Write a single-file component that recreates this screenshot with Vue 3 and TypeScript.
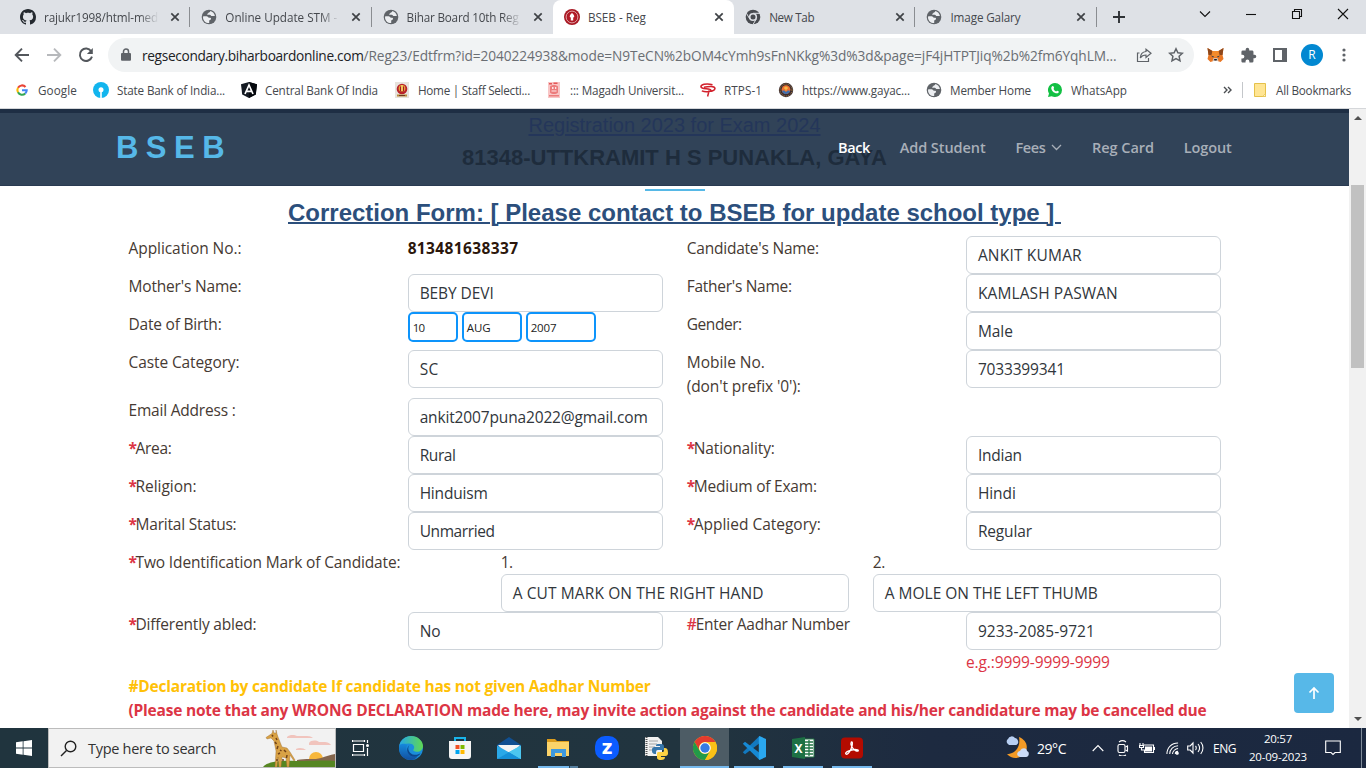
<script setup lang="ts">
interface Tab { icon: string; title: string; width: number; active?: boolean; line?: boolean }
interface Bookmark { icon: string; title: string; width: number }
interface Field { label: string; width: number; mark?: string; value?: string; valueWidth?: number; kind?: string; note?: string }
interface TaskApp { icon: string; state?: string }

// Stretches or tightens a run of text to a given width through its letter spacing.
const vFit = {
  mounted(el: HTMLElement, binding: { value: number }) {
    const count = (el.textContent || '').length
    const gap = (binding.value - el.getBoundingClientRect().width) / count
    el.style.letterSpacing = gap.toFixed(3) + 'px'
  }
}

const icons: Record<string, string> = {
  github: '<path fill="#24292f" d="M8 0C3.58 0 0 3.58 0 8c0 3.54 2.29 6.53 5.47 7.59.4.07.55-.17.55-.38 0-.19-.01-.82-.01-1.49-2.01.37-2.53-.49-2.69-.94-.09-.23-.48-.94-.82-1.13-.28-.15-.68-.52-.01-.53.63-.01 1.08.58 1.23.82.72 1.21 1.87.87 2.33.66.07-.52.28-.87.51-1.07-1.78-.2-3.64-.89-3.64-3.95 0-.87.31-1.59.82-2.15-.08-.2-.36-1.02.08-2.12 0 0 .67-.21 2.2.82.64-.18 1.32-.27 2-.27s1.36.09 2 .27c1.53-1.04 2.2-.82 2.2-.82.44 1.1.16 1.92.08 2.12.51.56.82 1.27.82 2.15 0 3.07-1.87 3.75-3.65 3.95.29.25.54.73.54 1.48 0 1.07-.01 1.93-.01 2.2 0 .21.15.46.55.38A8.01 8.01 0 0 0 16 8c0-4.42-3.58-8-8-8z"/>',
  globe: '<circle cx="8" cy="8" r="7.3" fill="#5f6368"/><path fill="#eceef1" d="M2.300 7.200h3.400c1.200 0 1.300 1.600 2.400 1.600h1.200c.9 0 1 1.700.2 2-.9.300-1.300.400-1.300 1.400v1.900C4.700 14.200 2 11.500 2 8.200zM9.300 2.100c-.1.900-.5 1.200-1.300 1.300-.9.100-.7 1.200-1.500 1.300-.5.100-.5 1 .1 1h2.300c.8 0 .8 1.100 1.500 1.200h3.500C13.400 4.600 11.800 2.700 9.300 2.100z"/>',
  bseb: '<circle cx="8" cy="8" r="8" fill="#a81823"/><circle cx="8" cy="8" r="5.900" fill="none" stroke="#e3a2a5" stroke-width="1"/><circle cx="8" cy="8" r="4.600" fill="#b41c28"/><path d="M8 3.900c1.700 1.200 2.400 2.600 2.200 4.200l-1 .4V11.500H6.800V8.500l-1-.4C5.600 6.500 6.300 5.100 8 3.900z" fill="#fff"/>',
  chromeGray: '<circle cx="8" cy="8" r="7.300" fill="#484b50"/><circle cx="8" cy="8" r="4.100" fill="#dee1e6"/><circle cx="8" cy="8" r="2.500" fill="#484b50"/><path d="M8 4.300h7M4.700 9.900L1.400 4.200M11.300 9.900l-3.500 6" stroke="#dee1e6" stroke-width="1"/>',
  google: '<g fill="none" stroke-width="2.100"><path d="M11.500 5A4.600 4.600 0 0 0 4 5.800" stroke="#ea4335"/><path d="M4 5.700a4.600 4.600 0 0 0 0 4.700" stroke="#fbbc05"/><path d="M4 10.300a4.600 4.600 0 0 0 7.200 1.200" stroke="#34a853"/><path d="M8 8.200h4.700a4.600 4.600 0 0 1-1.500 3.300" stroke="#4285f4"/></g>',
  sbi: '<circle cx="8" cy="8" r="8" fill="#12b5ee"/><circle cx="8" cy="7.800" r="2.500" fill="#fff"/><path d="M7.200 9h1.600v7H7.200z" fill="#fff"/>',
  angular: '<path d="M8 0l8 2.300-1.200 10.200L8 16l-6.800-3.500L0 2.300z" fill="#141a22"/><path d="M8 0l8 2.300-1.200 10.200L8 16z" fill="#05080d"/><path d="M4 12L8 3l4 9M5.700 9.300h4.600" fill="none" stroke="#fff" stroke-width="1.700"/>',
  staff: '<rect x="1" width="14" height="16" fill="#e7e2dc"/><circle cx="8" cy="7" r="5.300" fill="#b9222b"/><circle cx="8" cy="6.500" r="3.400" fill="#e4a03b"/><path d="M6 4.500h4v5H6z" fill="#a31825"/><path d="M7 3h2v6H7z" fill="#f0c55b"/><path d="M3 12.500h10v2H3z" fill="#b98b39"/><path d="M5 13.500h6" stroke="#703b22"/>',
  magadh: '<rect x="2" width="12" height="16" fill="#f8c6c6"/><path d="M3 1h3v1.500H3zM7.500.500h4V2h-4z" fill="#e45757"/><path d="M4 4.500c2-2 6-2 8 0v6c-2 2-6 2-8 0zM3 13h10v1.500H3z" fill="#ec7c7c"/><path d="M6 5h1.500v2H6zm3 0h1.300v2H9zM5.500 8.500h5v1h-5z" fill="#fde8e8"/>',
  rtps: '<path d="M12.500 2.700C6 .8.500 2.700 1 5c.6 2.500 9.500.8 9.800 3 .2 1.600-5 2.500-9 .9M4 5.300c4.500-1 11-1.500 11 1.300 0 2-3.800 2.700-6 2.500l-1.400 5.400" fill="none" stroke="#d2202b" stroke-width="1.500"/>',
  gaya: '<circle cx="8" cy="8" r="7.200" fill="#392c32"/><circle cx="8" cy="8" r="6" fill="none" stroke="#b98a3e" stroke-dasharray="1 1"/><circle cx="8" cy="7.600" r="4.400" fill="#ee7130"/><path d="M4 9c2-1 3 0 4 1 1-1 2-2 4-1-1 4-7 4-8 0z" fill="#3b6fb0"/><path d="M8 4.500v4M6 6h4" stroke="#fbd34f"/>',
  whatsapp: '<path d="M8 1a7 7 0 0 1 0 14 7 7 0 0 1-3.400-.8L1 15l1-3.400A7 7 0 0 1 8 1z" fill="#12c043"/><path d="M5.200 4.200c1-.7 1.700.7 1.900 1.500.1.500-.7.900-.5 1.300.5 1.200 1.300 1.900 2.500 2.400.5.100.8-.9 1.300-.7 2 .8 1.500 1.400 1 2-.8.900-2.300.8-3.700.1C6 9.900 4.900 8.500 4.400 6.900c-.3-1.100-.1-2.100.8-2.700z" fill="#fff"/>',
  folderMark: '<path d="M2.500 1.500h11v13h-11z" fill="#ffe593" stroke="#e5c14a"/><path d="M10.500 14.500l3-3v3z" fill="#fff4c8" stroke="#e5c14a" stroke-width=".7"/>'
}

const apps: Record<string, string> = {
  edge: '<defs><linearGradient id="ea" x1="0" x2="1"><stop stop-color="#25a8e7"/><stop offset="1" stop-color="#5fd852"/></linearGradient><linearGradient id="eb" x1="0" y1="0" x2="0" y2="1"><stop stop-color="#1689dc"/><stop offset="1" stop-color="#124f9f"/></linearGradient></defs><circle cx="12" cy="12" r="12" fill="#1a8edb"/><path d="M.3 9.500C1.600 3.900 6.400 0 12 0c7 0 12 5 12 10 0 3.800-3 5.800-6 5.800-2.700 0-4.400-1-3.500-2.200 2-3-.5-6-4.500-6-4 0-8 1-9.700 1.900z" fill="url(#ea)"/><path d="M8 9.200c-2.400 7 3.500 12.500 11.500 9.800C18 22 15 24 12 24 4 24-1.500 17 .4 9.400c2-2 5.600-2 7.600-.2z" fill="url(#eb)"/><path d="M10.500 9c-3 3.500-.2 9.300 5 9.800 2.700.2 4.500-.5 6-1.500-1 2.200-3.200 3.300-6 3.300C9 20.600 5.500 13.500 10.500 9z" fill="#0c468d"/>',
  store: '<path d="M7 6V2h10v4" fill="none" stroke="#19b4ea" stroke-width="2"/><path d="M1 5h22v15a3 3 0 0 1-3 3H4a3 3 0 0 1-3-3z" fill="#f5f5f5"/><path d="M7.500 9h4v4h-4z" fill="#f25022"/><path d="M12.500 9h4v4h-4z" fill="#7fba00"/><path d="M7.500 14h4v4h-4z" fill="#00a4ef"/><path d="M12.500 14h4v4h-4z" fill="#ffb900"/>',
  mail: '<path d="M0 9l12-8 12 8v3H0z" fill="#104f91"/><path d="M1 9h22l-6 7H7z" fill="#f4f4f4"/><path d="M0 9.500l13 7.500L0 23z" fill="#2aa8e8"/><path d="M24 9.500L0 23h24z" fill="#53cff2"/><path d="M0 23l12-7 12 7z" fill="#1690d8"/><path d="M24 9.500L12 16l12 7z" fill="#4cc6ef"/>',
  explorer: '<path d="M1 3h8l2 2h12v4H1z" fill="#dc9d1d"/><path d="M1 6h22v14H1z" fill="#fbd369"/><path d="M5 13h15v8h-4v-4H9v4H5z" fill="#3e99de"/>',
  zoomz: '<rect width="24" height="24" rx="10" fill="#0b5cff"/><text x="12" y="18" text-anchor="middle" font-family="Open Sans, sans-serif" font-weight="800" font-size="16.500" fill="#fff">Z</text>',
  python: '<path d="M1 1h13l4 4v15H1z" fill="#f1f1f1"/><path d="M2.500 1v19" stroke="#565656" stroke-width="2" stroke-dasharray="1 1"/><path d="M5 5h9M5 8h8M5 11h6M5 14h4" stroke="#a4a4a4"/><path d="M14 8h3c2.500 0 3 1 3 3v3h-6c-2 0-2 1-2 4-4 0-4-2-4-4 0-3 2-3 3-3h5v-1h-4c0-1 0-2 2-2z" fill="#3776ab"/><path d="M20 12c3 0 4 1 4 5 0 3-2 3-4 3h-3v1h4c0 2-1 3-4 3-4 0-4-2-4-3v-3c0-2 1-2 2-2h4c1 0 1-2 1-4z" fill="#ffd343"/>',
  chrome: '<circle cx="12" cy="12" r="12" fill="#fbc116"/><path d="M1.600 6A12 12 0 0 1 22.400 6H12a6 6 0 0 0-5.200 9z" fill="#e33b2e"/><path d="M1.600 6A12 12 0 0 0 12 24l5.200-9A6 6 0 0 1 6.800 15z" fill="#229a48"/><path d="M22.400 6A12 12 0 0 1 12 24l5.200-9c1.600-3 .8-7-2.200-9z" fill="#fbc116"/><circle cx="12" cy="12" r="5.800" fill="#fff"/><circle cx="12" cy="12" r="4.700" fill="#367be2"/>',
  vscode: '<path d="M17.500 0v7.200L3 18.200.800 16.200z" fill="#1279c0"/><path d="M.8 7.800L3 5.800l14.500 11V24z" fill="#1689d4"/><path d="M17.500 0L24 3v18l-6.500 3c-.5-.3-.7-.8-.7-1.500v-21c0-.7.200-1.200.7-1.500z" fill="#2aa7ef"/>',
  excel: '<path d="M13 3h10v18H13z" fill="#fff" stroke="#237445"/><path d="M14 6h8M14 9h8M14 12h8M14 15h8M14 18h8M18 4v16" stroke="#237445" stroke-width="1.300"/><path d="M1 3l13-2v22L1 21z" fill="#1d7044"/><text x="7.500" y="16.500" text-anchor="middle" font-family="Open Sans, sans-serif" font-weight="700" font-size="12" fill="#fff">X</text>',
  acrobat: '<rect x="1" y="1.500" width="22" height="21" rx="4" fill="#b30b00"/><path d="M6 18c-2-1.500 5-4.500 9-4.500 5 0 3.500 2.500 1 1.300C12 13 10 8 11.300 6c1.500-1 1.500 3-.3 7-1.500 3.200-3.700 6.200-5 5z" fill="none" stroke="#fff" stroke-width="1.300"/>'
}

const tabs: Tab[] = [
  { icon: 'github', title: 'rajukr1998/html-med', width: 114, line: true },
  { icon: 'globe', title: 'Online Update STM -', width: 112, line: true },
  { icon: 'globe', title: 'Bihar Board 10th Reg', width: 112 },
  { icon: 'bseb', title: 'BSEB - Reg', width: 58, active: true },
  { icon: 'chromeGray', title: 'New Tab', width: 45, line: true },
  { icon: 'globe', title: 'Image Galary', width: 70, line: true }
]

const bookmarks: Bookmark[] = [
  { icon: 'google', title: 'Google', width: 39 },
  { icon: 'sbi', title: 'State Bank of India...', width: 108 },
  { icon: 'angular', title: 'Central Bank Of India', width: 113 },
  { icon: 'staff', title: 'Home | Staff Selecti...', width: 112 },
  { icon: 'magadh', title: '::: Magadh Universit...', width: 114 },
  { icon: 'rtps', title: 'RTPS-1', width: 38 },
  { icon: 'gaya', title: 'https://www.gayac...', width: 108 },
  { icon: 'globe', title: 'Member Home', width: 81 },
  { icon: 'whatsapp', title: 'WhatsApp', width: 56 }
]

const firstFields: Field[] = [
  { label: 'Application No.:', width: 113, value: '813481638337', valueWidth: 111, kind: 'plain' },
  { label: "Candidate's Name:", width: 132, value: 'ANKIT KUMAR', valueWidth: 104 },
  { label: "Mother's Name:", width: 113, value: 'BEBY DEVI', valueWidth: 74 },
  { label: "Father's Name:", width: 105, value: 'KAMLASH PASWAN', valueWidth: 140 },
  { label: 'Date of Birth:', width: 93, kind: 'date' },
  { label: 'Gender:', width: 55, value: 'Male', valueWidth: 35 },
  { label: 'Caste Category:', width: 111, value: 'SC', valueWidth: 19 },
  { label: 'Mobile No.', width: 78, value: '7033399341', valueWidth: 87, note: "(don't prefix '0'):" },
  { label: 'Email Address :', width: 107, value: 'ankit2007puna2022@gmail.com', valueWidth: 228 },
  { label: '', width: 0, kind: 'none' },
  { mark: '*', label: 'Area:', width: 36, value: 'Rural', valueWidth: 36 },
  { mark: '*', label: 'Nationality:', width: 81, value: 'Indian', valueWidth: 44 },
  { mark: '*', label: 'Religion:', width: 61, value: 'Hinduism', valueWidth: 68 },
  { mark: '*', label: 'Medium of Exam:', width: 123, value: 'Hindi', valueWidth: 38 },
  { mark: '*', label: 'Marital Status:', width: 101, value: 'Unmarried', valueWidth: 75 },
  { mark: '*', label: 'Applied Category:', width: 127, value: 'Regular', valueWidth: 54 }
]

const marks = [
  { no: '1.', text: 'A CUT MARK ON THE RIGHT HAND', width: 251 },
  { no: '2.', text: 'A MOLE ON THE LEFT THUMB', width: 213 }
]

const taskApps: TaskApp[] = [
  { icon: 'edge' }, { icon: 'store' }, { icon: 'mail' }, { icon: 'explorer', state: 'multi' },
  { icon: 'zoomz' }, { icon: 'python' }, { icon: 'chrome', state: 'current' },
  { icon: 'vscode', state: 'open' }, { icon: 'excel', state: 'open' }, { icon: 'acrobat', state: 'open' }
]
</script>

<template>
  <div class="screen">
    <div class="tabstrip">
      <div v-for="(tab, i) in tabs" :key="i" class="tab" :class="{ active: tab.active, line: tab.line }">
        <svg class="i16" viewBox="0 0 16 16" v-html="icons[tab.icon]"></svg>
        <div class="tab-title" :class="{ fade: tab.width > 100 }"><span v-fit="tab.width" class="t">{{ tab.title }}</span></div>
        <svg class="close" viewBox="0 0 10 10"><path d="M1.300 1.300l7.400 7.400M8.700 1.300L1.300 8.700" stroke="#3f4246" stroke-width="1.700" /></svg>
      </div>
      <svg class="plus" viewBox="0 0 12 12"><path d="M6 0v12M0 6h12" stroke="#2f3236" stroke-width="1.900" /></svg>
      <div class="window-controls">
        <svg viewBox="0 0 46 28"><path d="M18 11.500l5 5 5-5" /></svg>
        <svg viewBox="0 0 46 28"><path d="M18 14.500h10" /></svg>
        <svg viewBox="0 0 46 28"><path d="M18.500 11.500h7v7h-7zM20.500 11.500v-2h7v7h-2" /></svg>
        <svg viewBox="0 0 46 28"><path d="M18 9l10 10M28 9L18 19" /></svg>
      </div>
    </div>

    <div class="toolbar">
      <svg class="nav-ic" viewBox="0 0 16 16"><path d="M15 8H2M8 1.700L1.700 8 8 14.300" stroke="#53575c" /></svg>
      <svg class="nav-ic" viewBox="0 0 16 16"><path d="M1 8h13M8 1.700L14.300 8 8 14.300" stroke="#b7b9bc" /></svg>
      <svg class="nav-ic" viewBox="0 0 16 16"><path d="M13.200 4.200A6.200 6.200 0 1 0 14 9.600" stroke="#53575c" /><path d="M14.800 1v5.900H8.900z" fill="#53575c" stroke="none" /></svg>
      <div class="omnibox">
        <svg class="lock" viewBox="0 0 10 14"><path d="M2.500 6V3.500a2.500 2.500 0 0 1 5 0V6" fill="none" stroke="#5f6368" stroke-width="1.500" /><rect x="0" y="5" width="10" height="7.800" rx="1" fill="#5f6368" /></svg>
        <span v-fit="221.500" class="host">regsecondary.biharboardonline.com</span>
        <span v-fit="753" class="path">/Reg23/Edtfrm?id=2040224938&amp;mode=N9TeCN%2bOM4cYmh9sFnNKkg%3d%3d&amp;page=jF4jHTPTJiq%2b%2fm6YqhLM...</span>
        <svg class="share" viewBox="0 0 16 16"><path d="M3.500 6H1.500v8.500h11V11M10 2.200l5 4.100-5 4.100V8C7.500 8 5.500 9 4.300 11 4.500 7.500 6.700 4.800 10 4.500z" fill="none" stroke="#5f6368" stroke-width="1.200" /></svg>
        <svg class="star" viewBox="0 0 16 16"><path d="M8 1.800l1.900 4 4.500.5-3.300 3 .9 4.500L8 11.500l-4 2.300.9-4.500-3.300-3 4.500-.5z" fill="none" stroke="#5f6368" stroke-width="1.500" /></svg>
      </div>
      <svg class="fox" viewBox="0 0 16 16"><path d="M0 1l5 3h6l5-3-1 7 1 4-3 3-3-1H6l-3 1-3-3 1-4z" fill="#e87724" /><path d="M0 1l5 3-1 4-3 0zM16 1l-5 3 1 4 3 0z" fill="#8d471b" /><path d="M5 4h6l1 5-4 1-4-1z" fill="#f48b2c" /><path d="M3.500 8.500l3 1-1 1zM12.500 8.500l-3 1 1 1z" fill="#2c3e50" /><path d="M6 11h4l1 3H5z" fill="#d5bfb2" /><path d="M6.500 12h3l-.5 1.500H7z" fill="#1c2229" /></svg>
      <svg class="puzzle" viewBox="0 0 24 24"><path fill="#5f6368" d="M20.500 11H19V7c0-1.100-.9-2-2-2h-4V3.500a2.500 2.500 0 0 0-5 0V5H4a2 2 0 0 0-2 2v3.800h1.500a2.700 2.700 0 0 1 0 5.400H2V20c0 1.100.9 2 2 2h3.800v-1.500a2.700 2.700 0 0 1 5.400 0V22H17a2 2 0 0 0 2-2v-4h1.500a2.500 2.500 0 0 0 0-5z" /></svg>
      <svg class="panel" viewBox="0 0 14 14"><path d="M1 1h12v12H1z" fill="none" stroke="#5f6368" stroke-width="2" /><path d="M9 1h4v12H9z" fill="#5f6368" /></svg>
      <span class="avatar">R</span>
      <svg class="dots" viewBox="0 0 4 14"><circle cx="2" cy="2" r="1.600" /><circle cx="2" cy="7" r="1.600" /><circle cx="2" cy="12" r="1.600" /></svg>
    </div>

    <div class="bookmarks">
      <div v-for="b in bookmarks" :key="b.title" class="bookmark">
        <svg class="i16" viewBox="0 0 16 16" v-html="icons[b.icon]"></svg>
        <span v-fit="b.width" class="t">{{ b.title }}</span>
      </div>
      <div class="more">
        <svg class="chev" viewBox="0 0 9 8"><path d="M1 1l3 3-3 3M5 1l3 3-3 3" fill="none" stroke="#4a4d51" stroke-width="1.400" /></svg>
        <i class="sep"></i>
        <svg class="i16" viewBox="0 0 16 16" v-html="icons.folderMark"></svg>
        <span v-fit="75" class="t">All Bookmarks</span>
      </div>
    </div>

    <div class="viewport">
      <div class="page">
        <header class="hero">
          <div class="under">
            <div class="line1"><span v-fit="292" class="t">Registration 2023 for Exam 2024</span></div>
            <div class="line2"><span v-fit="425" class="t">81348-UTTKRAMIT H S PUNAKLA, GAYA</span></div>
          </div>
          <nav class="nav">
            <div class="brand"><span v-fit="108" class="t">B S E B</span></div>
            <span v-fit="32" class="link on">Back</span>
            <span v-fit="86" class="link">Add Student</span>
            <span class="link fees"><span v-fit="30" class="t">Fees</span><svg viewBox="0 0 11 7"><path d="M1 1l4.500 4.500L10 1" fill="none" stroke="#a8afb8" stroke-width="1.300" /></svg></span>
            <span v-fit="62" class="link">Reg Card</span>
            <span v-fit="48" class="link">Logout</span>
          </nav>
        </header>
        <div class="rule"></div>
        <h2><span v-fit="773" class="t">Correction Form: [ Please contact to BSEB for update school type ]&nbsp;</span></h2>

        <div class="form">
          <div v-for="(f, i) in firstFields" :key="i" class="field">
            <div class="label">
              <b v-if="f.mark" class="req">{{ f.mark }}</b><span v-if="f.label" v-fit="f.width" class="t">{{ f.label }}</span>
              <div v-if="f.note"><span v-fit="114" class="t">{{ f.note }}</span></div>
            </div>
            <div class="value">
              <div v-if="f.kind === 'plain'" class="number"><span v-fit="f.valueWidth" class="t">{{ f.value }}</span></div>
              <div v-else-if="f.kind === 'date'" class="dates">
                <div class="d day"><span v-fit="12" class="t">10</span></div>
                <div class="d month"><span v-fit="24" class="t">AUG</span></div>
                <div class="d year"><span v-fit="26" class="t">2007</span></div>
              </div>
              <div v-else-if="f.value" class="input"><span v-fit="f.valueWidth" class="t">{{ f.value }}</span></div>
            </div>
          </div>
        </div>

        <div class="marks">
          <div class="label"><b class="req">*</b><span v-fit="265" class="t">Two Identification Mark of Candidate:</span></div>
          <div v-for="m in marks" :key="m.no" class="value">
            <div><span v-fit="12" class="t">{{ m.no }}</span></div>
            <div class="input"><span v-fit="m.width" class="t">{{ m.text }}</span></div>
          </div>
        </div>

        <div class="form">
          <div class="field">
            <div class="label"><b class="req">*</b><span v-fit="121" class="t">Differently abled:</span></div>
            <div class="value"><div class="input"><span v-fit="21" class="t">No</span></div></div>
          </div>
          <div class="field">
            <div class="label"><b class="req hash">#</b><span v-fit="154" class="t">Enter Aadhar Number</span></div>
            <div class="value">
              <div class="input"><span v-fit="117" class="t">9233-2085-9721</span></div>
              <div class="example"><span v-fit="144" class="t">e.g.:9999-9999-9999</span></div>
            </div>
          </div>
        </div>

        <div class="declare">
          <div class="yellow"><span v-fit="522" class="t">#Declaration by candidate If candidate has not given Aadhar Number</span></div>
          <div class="red"><span v-fit="1078" class="t">(Please note that any WRONG DECLARATION made here, may invite action against the candidate and his/her candidature may be cancelled due</span></div>
        </div>
        <div class="to-top"><svg viewBox="0 0 12 14"><path d="M6 13V2M1.500 6.500L6 2l4.500 4.500" fill="none" stroke="#fff" stroke-width="1.700" /></svg></div>
      </div>
      <div class="scrollbar">
        <svg viewBox="0 0 8 4"><path d="M0 4l4-4 4 4z" fill="#505050" /></svg>
        <i class="thumb"></i>
        <svg viewBox="0 0 8 4"><path d="M0 0l4 4 4-4z" fill="#505050" /></svg>
      </div>
    </div>

    <div class="taskbar">
      <div class="start"><svg viewBox="0 0 16 16"><path d="M0 2.200L6.700 1.300v6.200H0zM7.500 1.200L16 0v7.500H7.500zM0 8.400h6.700v6.300L0 13.800zM7.500 8.400H16V16l-8.500-1.200z" fill="#fff" /></svg></div>
      <div class="search">
        <svg class="lens" viewBox="0 0 17 17"><circle cx="10.500" cy="6.500" r="5.300" fill="none" stroke="#222" stroke-width="1.400" /><path d="M6.500 10.500L1 16" stroke="#222" stroke-width="1.400" /></svg>
        <span v-fit="128" class="t">Type here to search</span>
        <svg class="giraffe" viewBox="0 0 72 38">
          <path d="M24 8c3-3 8-2 10-1h10c4 0 6 2 6 2H24zM46 14c2-3 7-3 10-1h6c4 0 6 3 6 3H46zM33 20c3-2 8-1 10 1H33z" fill="#f1c4bd" />
          <circle cx="53" cy="30" r="7" fill="#f7b73c" />
          <path d="M34 31c8-2 18 0 24-2 5-2 9-3 14-4v13H34z" fill="#84664d" />
          <path d="M0 38c3-5 17-7 34-6 16 0 25-1 38 0v6z" fill="#568622" />
          <path d="M3 8.500l6-4L10 1l1 3h2V1l1 4 1 3 4 10 5 1 3 4 5 8-1 1-4-6-1 12h-2l-1-9-4-1-1 10h-2l-1-10-1 10h-2l1-16-2-10-3-3-4 1z" fill="#d9a245" stroke="#9b692b" stroke-width=".4" />
          <path d="M9 6l1 1.500M13 9l1 2M12 13l1.500 2M15 17l-1 3M17 21l1.500 1M21 21l2 2M15 25l2-1M24 26l-.5 3M14 30v2M20 30v2" stroke="#724217" stroke-width="1.500" />
        </svg>
      </div>
      <div class="taskview"><svg viewBox="0 0 17 16"><path d="M1 1h11M1 15h11M1.500 4.500h10v7h-10zM.5 0v2M12.500 0v2M.5 16v-2M12.500 16v-2M15.500 0v3M15.500 8v8" fill="none" stroke="#fff" stroke-width="1.200" /><circle cx="15.500" cy="5.500" r="1.500" fill="#fff" /></svg></div>
      <div v-for="a in taskApps" :key="a.icon" class="app" :class="a.state">
        <svg viewBox="0 0 24 24" v-html="apps[a.icon]"></svg>
      </div>
      <div class="tray">
        <svg class="weather" viewBox="0 0 24 24"><path d="M14 1c7 3 10 9 6 16-4 6-13 7-18 1 8 0 14-7 12-17z" fill="#f39a25" /><path d="M3 8a3 3 0 0 1 0-5 4 4 0 0 1 7-1c3 0 5 6 1 7H4z" fill="#b8cff2" /><path d="M13 20c-2-2 0-5 2-5 2-4 7-3 7 0 3 1 2 6-1 6h-6z" fill="#cbdcf8" /></svg>
        <span v-fit="29" class="temp">29°C</span>
        <svg class="up" viewBox="0 0 12 8"><path d="M.7 7L6 1.500 11.300 7" /></svg>
        <svg class="cam" viewBox="0 0 12 16"><rect x="1" y="4.500" width="7" height="8" rx="1.500" /><path d="M8.500 7l2-1v5l-2-1M2 2c2-1.500 5-1.500 7 0M2 15c2 1.200 5 1.200 7 0" /></svg>
        <svg class="bat" viewBox="0 0 16 12"><path d="M4.500 3h10v7.500h-9V8" /><path d="M6.500 5h6v4h-6z" fill="#fff" /><path d="M15.500 5v3M1 1v2M4 1v2M.5 3.500h4v2h-4zM2.500 5.500V8H6" /></svg>
        <svg class="wifi" viewBox="0 0 14 14"><path d="M1 13C1 6 6 1 13 1M4 13c0-5 4-9 9-9M7 13c0-3 3-6 6-6M10 13c0-2 1-3 3-3" /><circle cx="12" cy="12" r="1.200" fill="#fff" /></svg>
        <svg class="vol" viewBox="0 0 17 14"><path d="M.7 5h2.500L6 2v10L3.200 9H.7zM8.500 5c1 1 1 3 0 4M11 3c2 2.500 2 5.500 0 8M13.700 1c3 3.500 3 8.500 0 12" /></svg>
        <span v-fit="23" class="lang">ENG</span>
        <div class="clock"><span v-fit="28" class="t">20:57</span><span v-fit="58" class="t">20-09-2023</span></div>
        <svg class="note" viewBox="0 0 16 16"><path d="M.7 1h14.600v11.500H10l-2 2-2-2H.7z" /></svg>
        <i class="edge"></i>
      </div>
    </div>
  </div>
</template>

<style>
body { margin: 0; overflow: hidden; }
</style>

<style scoped>
.screen { width: 1366px; height: 768px; display: flex; flex-direction: column; overflow: hidden; background: #fff; font-family: "Open Sans", "Noto Sans", sans-serif; box-sizing: border-box; }
.screen * { box-sizing: border-box; }
svg { display: block; flex: none; }
.t, .host, .path, .link, .temp, .lang { display: inline-block; white-space: nowrap; flex: none; }
.i16 { width: 16px; height: 16px; }

.tabstrip { height: 34px; flex: none; display: flex; align-items: center; background: #dee1e6; padding-left: 9px; font-size: 11.700px; color: #45484d; }
.tab { width: 181.300px; height: 34px; display: flex; align-items: center; padding: 0 10px 0 11px; flex: none; }
.tab.line { background: linear-gradient(#8a8d91, #8a8d91) right center / 1px 20px no-repeat; }
.tab.active { background: #fff; border-radius: 8px 8px 0 0; }
.tab-title { width: 116px; margin-left: 8px; overflow: hidden; flex: none; }
.tab-title.fade { mask-image: linear-gradient(90deg, #000 82%, transparent 99%); }
.close { width: 10px; height: 10px; margin-left: 10px; }
.plus { width: 12px; height: 12px; margin-left: 16px; }
.window-controls { display: flex; height: 28px; margin-left: auto; align-self: flex-start; }
.window-controls svg { width: 46px; height: 28px; fill: none; stroke: #111; stroke-width: 1.100; }

.toolbar { height: 42px; flex: none; display: flex; align-items: center; padding-left: 14px; }
.nav-ic { width: 16px; height: 16px; margin-right: 16px; fill: none; stroke-width: 1.900; }
.omnibox { width: 1086px; height: 34px; margin-left: -2px; background: #f1f3f4; border-radius: 17px; display: flex; align-items: center; padding-left: 13px; font-size: 13.700px; color: #202124; flex: none; white-space: nowrap; }
.lock { width: 10px; height: 14px; margin-right: 11px; }
.path { color: #6a6e73; }
.share { width: 16px; height: 16px; margin-left: auto; }
.star { width: 16px; height: 16px; margin: 0 10px 0 16px; }
.fox { width: 17px; height: 16px; margin-left: 13px; }
.puzzle { width: 17px; height: 17px; margin-left: 16px; }
.panel { width: 14px; height: 14px; margin-left: 16px; }
.avatar { width: 22px; height: 22px; border-radius: 50%; background: #0288d1; color: #fff; font-size: 12px; line-height: 22px; text-align: center; margin-left: 14px; }
.dots { width: 4px; height: 14px; margin-left: 19px; fill: #5f6368; }

.bookmarks { height: 33px; flex: none; display: flex; align-items: center; gap: 16px; padding: 0 15px 4px 14px; border-bottom: 1px solid #d5d7da; font-size: 11.700px; color: #45484d; }
.bookmark { display: flex; gap: 8px; align-items: center; }
.more { display: flex; align-items: center; margin-left: auto; }
.more .chev { width: 9px; height: 8px; }
.sep { width: 1px; height: 16px; background: #c4c7ca; margin: 0 9px 0 10px; }
.more .t { margin-left: 8px; }

.viewport { height: 619px; flex: none; display: flex; }
.page { width: 1349px; height: 619px; position: relative; overflow: hidden; font-size: 15.500px; line-height: 24px; color: #463a33; }
.hero { display: grid; height: 77px; background: #314358; border-top: 4px solid #1e2e44; border-bottom: 1px solid #293a51; }
.under, .nav { grid-area: 1 / 1; }
.under { text-align: center; font-family: "Liberation Sans", Arial, sans-serif; }
.line1 { color: #24365a; font-size: 20px; }
.line1 .t { text-decoration: underline; text-decoration-thickness: 2px; text-underline-offset: 2px; }
.line2 { color: #1e2c3c; font-size: 22px; font-weight: 700; margin-top: 9px; }
.nav { display: flex; align-items: center; padding: 0 0 3px 116px; color: #a8afb8; font-size: 14.500px; font-weight: 600; }
.brand { width: 722px; font-family: "Liberation Sans", Arial, sans-serif; font-size: 31px; font-weight: 700; color: #56b8e8; }
.link { margin-right: 29.700px; }
.link.on { color: #fff; }
.fees { display: flex; align-items: center; gap: 6px; }
.fees svg { width: 11px; height: 7px; }
.rule { width: 60px; height: 2px; margin: 3px auto 0; background: #56b8e6; }
h2 { margin: 8px 0 0; height: 27px; line-height: 27px; text-align: center; font-family: "Liberation Sans", Arial, sans-serif; font-size: 24px; color: #2c4f7c; }
h2 .t { text-decoration: underline; text-decoration-thickness: 2px; }

.form { display: grid; grid-template-columns: 1fr 1fr; width: 1116.500px; margin: 0 0 0 116.500px; }
h2 + .form { margin-top: 10px; }
.field { display: grid; grid-template-columns: 1fr 1fr; min-height: 38px; }
.label, .value { padding: 0 12px; white-space: nowrap; min-width: 0; }
.req { color: #dc3545; font-weight: 700; display: inline-block; width: 7px; }
.req.hash { width: 9px; font-weight: 600; }
.number { font-weight: 700; color: #2c170c; }
.input { height: 38px; border: 1px solid #ced4da; border-radius: 6px; padding: 6px 11px; color: #31363b; background: #fff; }
.dates { display: flex; gap: 4px; }
.d { height: 30px; border: 2px solid #0d94fb; border-radius: 5px; font-size: 11.500px; line-height: 27px; padding-left: 3px; color: #222; }
.day { width: 50px; }
.month { width: 60px; }
.year { width: 70px; }
.marks { display: grid; grid-template-columns: 1fr 1fr 1fr; width: 1116.500px; height: 62px; margin: 0 0 0 116.500px; }
.example { color: #dc3545; }
.declare { width: 1116.500px; margin: 0 0 0 116.500px; padding-left: 12px; font-weight: 700; white-space: nowrap; }
.yellow { color: #ffc107; }
.red { color: #dc3545; }
.to-top { position: absolute; right: 15px; bottom: 15px; width: 40px; height: 40px; border-radius: 4px; background: #57b8e8; display: flex; align-items: center; justify-content: center; }
.to-top svg { width: 12px; height: 14px; }
.scrollbar { width: 17px; height: 619px; background: #f1f1f1; display: flex; flex-direction: column; align-items: center; padding: 7px 0; }
.scrollbar svg { width: 8px; height: 4px; }
.thumb { width: 13px; height: 183px; margin: 65px 0 auto; background: #c1c1c1; }

.taskbar { height: 40px; flex: none; display: flex; background: linear-gradient(90deg, #20343e 0%, #21343f 52%, #1d2a40 68%, #1b2840 100%); color: #fff; }
.start { width: 48px; display: flex; align-items: center; justify-content: center; }
.start svg { width: 16px; height: 16px; }
.search { width: 288px; height: 40px; background: #f2f2f2; border: 1px solid #bcbcbc; display: flex; align-items: center; padding-left: 11px; color: #333; font-size: 14.500px; }
.lens { width: 17px; height: 17px; margin-right: 11px; }
.giraffe { width: 72px; height: 38px; margin-left: auto; }
.taskview { width: 48px; margin-right: 2px; display: flex; align-items: center; justify-content: center; }
.taskview svg { width: 17px; height: 16px; }
.app { width: 49px; height: 40px; display: flex; align-items: center; justify-content: center; }
.app svg { width: 24px; height: 24px; }
.app.open { background: linear-gradient(#76b9ed, #76b9ed) center bottom / 40px 2px no-repeat; }
.app.multi { background: linear-gradient(90deg, #76b9ed 31px, #25465c 31px, #25465c 32px, #557f9f 32px) center bottom / 40px 2px no-repeat; }
.app.current { background: #4d5c65; border-bottom: 2px solid #76b9ed; }
.app.current svg { margin-top: 2px; }
.tray { display: flex; align-items: center; margin-left: 129px; width: 361px; }
.tray svg { fill: none; stroke: #fff; stroke-width: 1.100; }
.tray .weather { width: 24px; height: 24px; stroke: none; }
.temp { font-size: 14px; margin-left: 8px; }
.up { width: 12px; height: 8px; margin-left: 26px; }
.cam { width: 12px; height: 16px; margin-left: 13px; }
.bat { width: 16px; height: 12px; margin-left: 10px; }
.wifi { width: 13px; height: 13px; margin-left: 11px; }
.vol { width: 17px; height: 14px; margin-left: 8px; }
.lang { font-size: 12px; margin-left: 9px; }
.clock { display: flex; flex-direction: column; align-items: center; width: 60px; margin-left: 12px; font-size: 11.500px; line-height: 18px; }
.note { width: 16px; height: 16px; margin-left: 17px; }
.edge { width: 1px; height: 40px; margin-left: 20px; background: #7f8b99; }
</style>
